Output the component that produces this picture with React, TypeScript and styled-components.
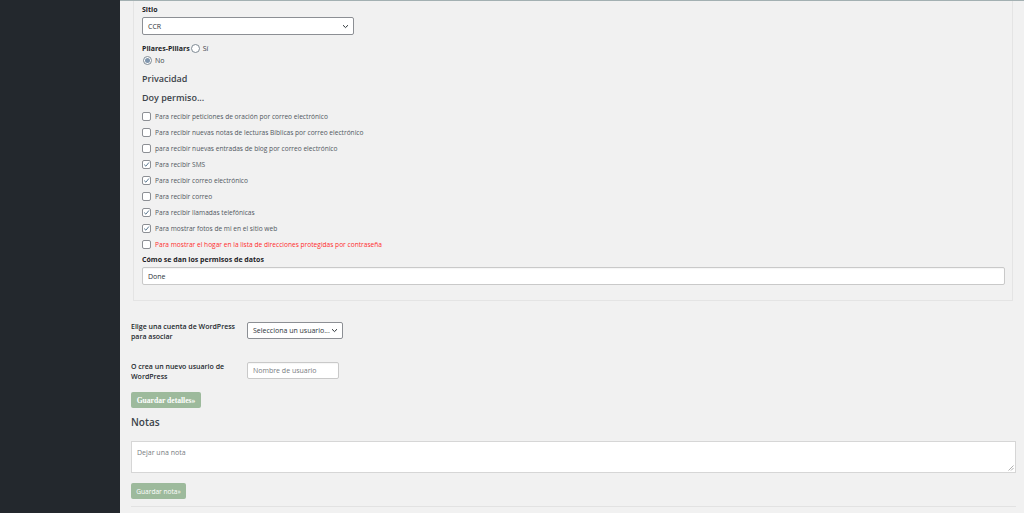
import React from "react";
import styled, { createGlobalStyle } from "styled-components";

const Global = createGlobalStyle`
  html, body { margin: 0; padding: 0; background: #f1f1f1; }
  body { font-family: "Open Sans", "Noto Sans", sans-serif; color: #3c434a; }
  * { box-sizing: border-box; }
`;

const Page = styled.div`
  display: flex;
  width: 1024px;
  height: 513px;
  overflow: hidden;
  background: #f1f1f1;
`;

const Sidebar = styled.aside`
  width: 120px;
  flex: none;
  background: #23282d;
`;

const Main = styled.main`
  flex: 1;
  display: flex;
  flex-direction: column;
  border-top: 1px solid #a3b0b2;
  padding: 0 8px 0 11px;
`;

const Panel = styled.section`
  margin-left: 2px;
  margin-right: 3px;
  border: 1px solid #e4e4e4;
  border-top: none;
  padding: 4px 7px 15px 8px;
  display: flex;
  flex-direction: column;
`;

const FieldLabel = styled.div<{ $mt?: number }>`
  font-size: 7px;
  line-height: 10px;
  font-weight: 700;
  color: #1d2327;
  margin-top: ${(p) => p.$mt ?? 0}px;
`;

const SelectBox = styled.div<{ $w: number; $h?: number; $mt?: number }>`
  width: ${(p) => p.$w}px;
  height: ${(p) => p.$h ?? 18}px;
  margin-top: ${(p) => p.$mt ?? 0}px;
  border: 1px solid #8c8f94;
  border-radius: 2px;
  background: #fff;
  display: flex;
  align-items: center;
  justify-content: space-between;
  padding: 0 4px 0 5px;
  font-size: 7px;
  color: #2c3338;
  flex: none;
`;

const TextInput = styled.div<{ $w?: number; $h?: number; $mt?: number; $placeholder?: boolean }>`
  width: ${(p) => (p.$w ? `${p.$w}px` : "100%")};
  height: ${(p) => p.$h ?? 18}px;
  margin-top: ${(p) => p.$mt ?? 0}px;
  border: 1px solid #c9c9c9;
  border-radius: 2px;
  background: #fff;
  display: flex;
  align-items: center;
  padding: 0 5px;
  font-size: 7px;
  color: ${(p) => (p.$placeholder ? "#787c82" : "#2c3338")};
  flex: none;
  box-shadow: inset 0 1px 1px rgba(0, 0, 0, 0.04);
`;

const RadioLine = styled.div<{ $mt?: number }>`
  display: flex;
  align-items: center;
  height: 10px;
  margin-top: ${(p) => p.$mt ?? 0}px;
  font-size: 7px;
  color: #3c434a;
`;

const RadioCircle = styled.span<{ $checked?: boolean }>`
  width: 9px;
  height: 9px;
  border-radius: 50%;
  border: 1px solid #7e8993;
  background: #fff;
  display: inline-flex;
  align-items: center;
  justify-content: center;
  margin: 0 3px 0 1px;
  &::after {
    content: "";
    display: ${(p) => (p.$checked ? "block" : "none")};
    width: 5px;
    height: 5px;
    border-radius: 50%;
    background: #7f95ad;
  }
`;

const BoldInline = styled.span`
  font-weight: 700;
  color: #1d2327;
`;

const Heading = styled.div<{ $mt: number }>`
  font-size: 9px;
  line-height: 12px;
  font-weight: 600;
  color: #3c434a;
  margin-top: ${(p) => p.$mt}px;
`;

const CheckList = styled.div`
  display: flex;
  flex-direction: column;
  margin-top: 4px;
`;

const CheckRow = styled.label<{ $danger?: boolean }>`
  display: flex;
  align-items: center;
  height: 16px;
  font-size: 6.6px;
  color: ${(p) => (p.$danger ? "#ff2b2b" : "#50575e")};
`;

const Box = styled.span`
  width: 9px;
  height: 9px;
  border: 1px solid #8c8f94;
  border-radius: 2px;
  background: #fff;
  margin-right: 4px;
  display: inline-flex;
  align-items: center;
  justify-content: center;
  flex: none;
`;

const AccountRow = styled.div<{ $mt: number }>`
  display: flex;
  align-items: flex-start;
  margin-top: ${(p) => p.$mt}px;
`;

const AccountLabel = styled.div`
  width: 116px;
  font-size: 7px;
  line-height: 10px;
  font-weight: 600;
  color: #23282d;
`;

const GreenButton = styled.div<{ $mt: number; $w: number; $serif?: boolean }>`
  margin-top: ${(p) => p.$mt}px;
  width: ${(p) => p.$w}px;
  height: 16px;
  background: #9dba9c;
  border-radius: 2px;
  color: #fff;
  display: flex;
  align-items: center;
  justify-content: center;
  font-size: ${(p) => (p.$serif ? 7.6 : 6.6)}px;
  font-weight: ${(p) => (p.$serif ? 700 : 400)};
  font-family: ${(p) =>
    p.$serif ? '"Liberation Serif", serif' : '"Open Sans", sans-serif'};
`;

const NotesTitle = styled.div`
  margin-top: 7px;
  font-size: 10px;
  line-height: 14px;
  font-weight: 600;
  color: #3c434a;
`;

const TextArea = styled.div`
  position: relative;
  margin-top: 12px;
  height: 32px;
  border: 1px solid #d6d6d6;
  background: #fff;
  padding: 6px 5px;
  font-size: 7px;
  color: #787c82;
`;

const Grip = styled.svg`
  position: absolute;
  right: 1px;
  bottom: 1px;
`;

const Divider = styled.div`
  margin-top: 7px;
  border-top: 1px solid #e2e2e2;
`;

const Chevron = () => (
  <svg width="7" height="5" viewBox="0 0 7 5">
    <path d="M1 1.2 L3.5 3.6 L6 1.2" fill="none" stroke="#2c3338" strokeWidth="1" />
  </svg>
);

const Check = () => (
  <svg width="7" height="7" viewBox="0 0 7 7">
    <path d="M1.2 3.6 L2.9 5.2 L5.9 1.5" fill="none" stroke="#5b7890" strokeWidth="1" />
  </svg>
);

const perms: { text: string; checked?: boolean; danger?: boolean }[] = [
  { text: "Para recibir peticiones de oración por correo electrónico" },
  { text: "Para recibir nuevas notas de lecturas Bíblicas por correo electrónico" },
  { text: "para recibir nuevas entradas de blog por correo electrónico" },
  { text: "Para recibir SMS", checked: true },
  { text: "Para recibir correo electrónico", checked: true },
  { text: "Para recibir correo" },
  { text: "Para recibir llamadas telefónicas", checked: true },
  { text: "Para mostrar fotos de mi en el sitio web", checked: true },
  { text: "Para mostrar el hogar en la lista de direcciones protegidas por contraseña", danger: true },
];

export default function App() {
  return (
    <>
      <Global />
      <Page>
        <Sidebar />
        <Main>
          <Panel>
            <FieldLabel>Sitio</FieldLabel>
            <SelectBox $w={212} $mt={2}>
              <span>CCR</span>
              <Chevron />
            </SelectBox>
            <RadioLine $mt={8}>
              <BoldInline>Pilares-Pillars</BoldInline>
              <RadioCircle />
              <span>Sí</span>
            </RadioLine>
            <RadioLine $mt={2}>
              <RadioCircle $checked />
              <span>No</span>
            </RadioLine>
            <Heading $mt={8}>Privacidad</Heading>
            <Heading $mt={7}>Doy permiso...</Heading>
            <CheckList>
              {perms.map((p) => (
                <CheckRow key={p.text} $danger={p.danger}>
                  <Box>{p.checked && <Check />}</Box>
                  {p.text}
                </CheckRow>
              ))}
            </CheckList>
            <FieldLabel $mt={3}>Cómo se dan los permisos de datos</FieldLabel>
            <TextInput $mt={2}>Done</TextInput>
          </Panel>

          <AccountRow $mt={21}>
            <AccountLabel>
              Elige una cuenta de WordPress
              <br />
              para asociar
            </AccountLabel>
            <SelectBox $w={96} $h={17}>
              <span>Selecciona un usuario...</span>
              <Chevron />
            </SelectBox>
          </AccountRow>
          <AccountRow $mt={20}>
            <AccountLabel>
              O crea un nuevo usuario de
              <br />
              WordPress
            </AccountLabel>
            <TextInput $w={92} $h={17} $placeholder>
              Nombre de usuario
            </TextInput>
          </AccountRow>
          <GreenButton $mt={10} $w={70} $serif>
            Guardar detalles»
          </GreenButton>
          <NotesTitle>Notas</NotesTitle>
          <TextArea>
            Dejar una nota
            <Grip width="6" height="6" viewBox="0 0 6 6">
              <path d="M5.5 0.5 L0.5 5.5 M5.5 3 L3 5.5" stroke="#9a9a9a" strokeWidth="0.8" />
            </Grip>
          </TextArea>
          <GreenButton $mt={10} $w={55}>
            Guardar nota»
          </GreenButton>
          <Divider />
        </Main>
      </Page>
    </>
  );
}
